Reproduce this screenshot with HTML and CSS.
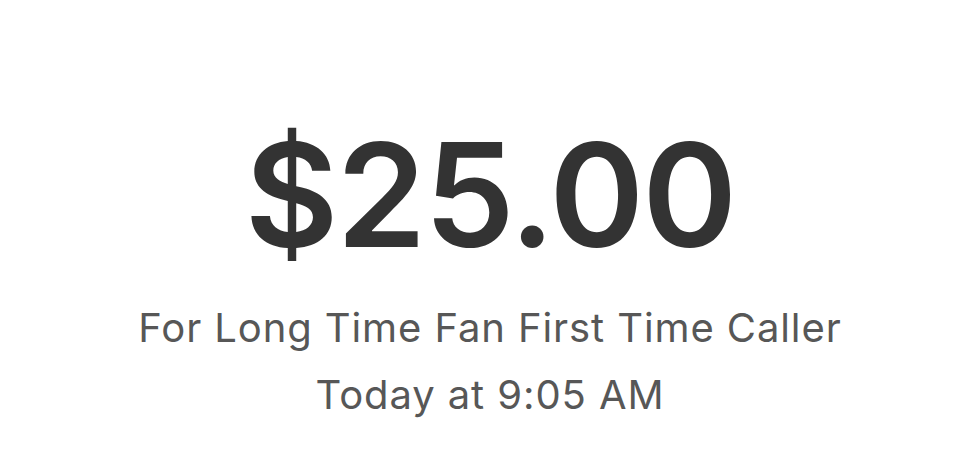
FILE: index.html
```html
<!doctype html>
<html lang="en">
<head>
    <meta charset="UTF-8">
    <meta name="viewport" content="width=device-width, initial-scale=1.0">
    <title>Payment</title>
    <link rel="stylesheet" href="styles.css">
</head>
<body>
<div class="receipt">
    <div class="amount">$25.00</div>
    <p class="note">For Long Time Fan First Time Caller</p>
    <p class="date">Today at 9:05 AM</p>
</div>
</body>
</html>
```

FILE: styles.css
```css
body {
    margin: 0;
    background: #fff;
    font-family: Inter, "Noto Sans", sans-serif;
}
.receipt {
    display: flex;
    flex-direction: column;
    align-items: center;
    padding-top: 123px;
}
.amount {
    font-size: 144px;
    font-weight: 600;
    line-height: 144px;
    color: #333333;
    letter-spacing: -2px;
}
.note,
.date {
    margin: 0;
    font-size: 40px;
    font-weight: 400;
    line-height: 50px;
    letter-spacing: 0.9px;
    color: #575757;
}
.note {
    margin-top: 36px;
}
.date {
    margin-top: 17px;
}
```
